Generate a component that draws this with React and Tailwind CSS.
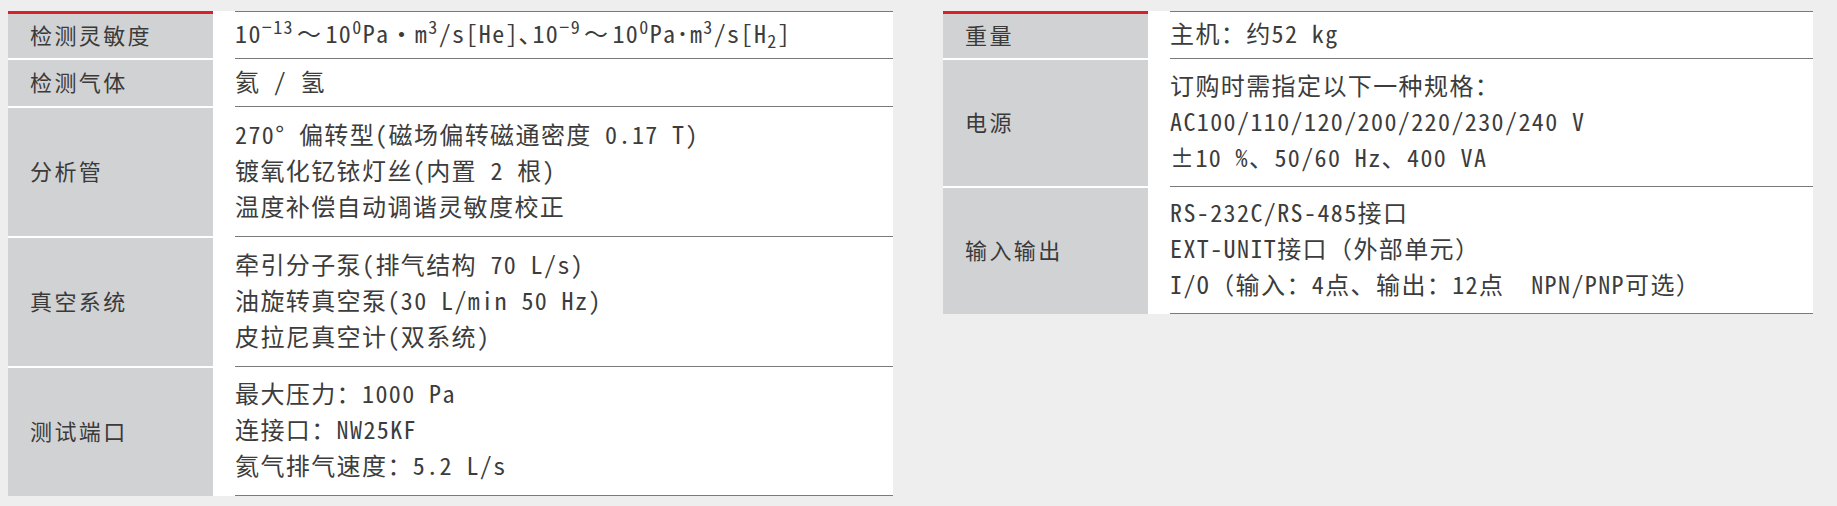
const Wave = () => <span className="mx-[3px]">～</span>;

const leftRows = [
  {
    label: '检测灵敏度',
    h: 'h-[47px]',
    lines: [
      <>
        10<sup>−13</sup>
        <Wave />
        10<sup>0</sup>Pa・m<sup>3</sup>/s[He]､10<sup>−9</sup>
        <Wave />
        10<sup>0</sup>Pa･m<sup>3</sup>/s[H<sub>2</sub>]
      </>,
    ],
  },
  { label: '检测气体', h: 'h-[48px]', lines: ['氦 / 氢'] },
  {
    label: '分析管',
    h: 'h-[130px]',
    lines: ['270° 偏转型(磁场偏转磁通密度 0.17 T)', '镀氧化钇铱灯丝(内置 2 根)', '温度补偿自动调谐灵敏度校正'],
  },
  {
    label: '真空系统',
    h: 'h-[130px]',
    lines: ['牵引分子泵(排气结构 70 L/s)', '油旋转真空泵(30 L/min 50 Hz)', '皮拉尼真空计(双系统)'],
  },
  {
    label: '测试端口',
    h: 'h-[130px]',
    lines: ['最大压力：1000 Pa', '连接口：NW25KF', '氦气排气速度：5.2 L/s'],
  },
];

const rightRows = [
  { label: '重量', h: 'h-[47px]', lines: ['主机：约52 kg'] },
  {
    label: '电源',
    h: 'h-[128px]',
    lines: ['订购时需指定以下一种规格：', 'AC100/110/120/200/220/230/240 V', '±10 %、50/60 Hz、400 VA'],
  },
  {
    label: '输入输出',
    h: 'h-[128px]',
    lines: ['RS-232C/RS-485接口', 'EXT-UNIT接口（外部单元）', 'I/O（输入：4点、输出：12点  NPN/PNP可选）'],
  },
];

function SpecTable({ rows, width }) {
  return (
    <div className={`flex flex-col ${width}`}>
      {rows.map((row, i) => {
        const first = i === 0;
        const last = i === rows.length - 1;
        return (
          <div key={row.label} className={`flex ${row.h}`}>
            <div
              className={`w-[205px] shrink-0 bg-[#d1d2d4] flex items-center pl-[22px] pb-[4px] text-[22px] tracking-[2.4px] text-[#3a3a3a] ${
                first ? 'border-t-[3px] border-[#d7202b]' : 'border-t-2 border-white'
              }`}
            >
              {row.label}
            </div>
            <div className="flex-1 bg-white pl-[22px] flex">
              <div
                className={`flex-1 flex flex-col justify-center pb-[4px] border-t border-[#7a7a7a] text-[#3c3c3c] text-[24px] tracking-[1.4px] leading-[36px] ${
                  last ? 'border-b' : ''
                }`}
              >
                {row.lines.map((line, j) => (
                  <div key={j} className="whitespace-pre">
                    {line}
                  </div>
                ))}
              </div>
            </div>
          </div>
        );
      })}
    </div>
  );
}

export default function App() {
  return (
    <div className="w-full h-[506px] bg-[#eeeeee] flex items-start gap-[50px] pl-[8px] pt-[11px] font-['Noto_Sans_Mono_CJK_SC','Noto_Sans_CJK_SC',monospace]">
      <SpecTable rows={leftRows} width="w-[885px]" />
      <SpecTable rows={rightRows} width="w-[870px]" />
    </div>
  );
}
